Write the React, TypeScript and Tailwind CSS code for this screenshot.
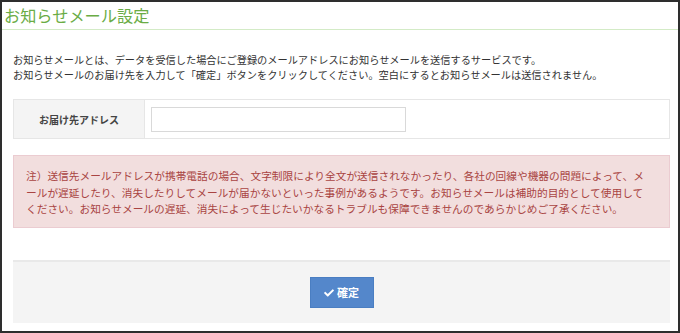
import { FaCheck } from "react-icons/fa";

const jp = "font-['Noto_Sans_CJK_JP','Noto_Sans',sans-serif]";

const App = () => {
    return (
        <div className={`w-[680px] h-[333px] box-border border-2 border-[#2e2e2e] bg-white overflow-hidden ${jp}`}>
            <h2 className="h-[28px] pl-[2px] pt-[1px] text-[16.2px] leading-[24px] font-normal text-[#6aac45] border-b border-[#d3ebc6]">
                お知らせメール設定
            </h2>

            <div className="pl-[11px] pr-[8px]">
                <p className="mt-[23px] text-[10.2px] leading-[14.5px] text-[#333] whitespace-nowrap">
                    お知らせメールとは、データを受信した場合にご登録のメールアドレスにお知らせメールを送信するサービスです。
                    <br />
                    お知らせメールのお届け先を入力して「確定」ボタンをクリックしてください。空白にするとお知らせメールは送信されません。
                </p>

                <div className="mt-[17px] h-[40px] flex border border-[#e6e6e6]">
                    <div className="w-[131px] flex items-center justify-center bg-[#f4f4f4] border-r border-[#e6e6e6] text-[10px] font-bold text-[#444]">
                        お届け先アドレス
                    </div>
                    <div className="flex items-center pl-[6px]">
                        <input type="text" className="w-[255px] h-[25px] border border-[#d9d9d9] bg-white outline-none" />
                    </div>
                </div>

                <div className="mt-[16px] h-[73px] px-[12px] pt-[12px] bg-[#f2dede] border border-[#ebccd1] text-[10.7px] leading-[16.7px] text-[#a94442] whitespace-nowrap">
                    注）送信先メールアドレスが携帯電話の場合、文字制限により全文が送信されなかったり、各社の回線や機器の問題によって、メ
                    <br />
                    ールが遅延したり、消失したりしてメールが届かないといった事例があるようです。お知らせメールは補助的目的として使用して
                    <br />
                    ください。お知らせメールの遅延、消失によって生じたいかなるトラブルも保障できませんのであらかじめご了承ください。
                </div>

                <div className="mt-[32px] h-[63px] flex items-center justify-center bg-[#f4f4f4] border-t-2 border-[#e9e9e9]">
                    <button className="w-[64px] h-[31px] flex items-center justify-center gap-[3px] bg-[#5487cb] border border-[#4a7ec2] text-white text-[11px] font-bold">
                        <FaCheck className="w-[10px] h-[10px]" />
                        確定
                    </button>
                </div>
            </div>
        </div>
    )
}

export default App
